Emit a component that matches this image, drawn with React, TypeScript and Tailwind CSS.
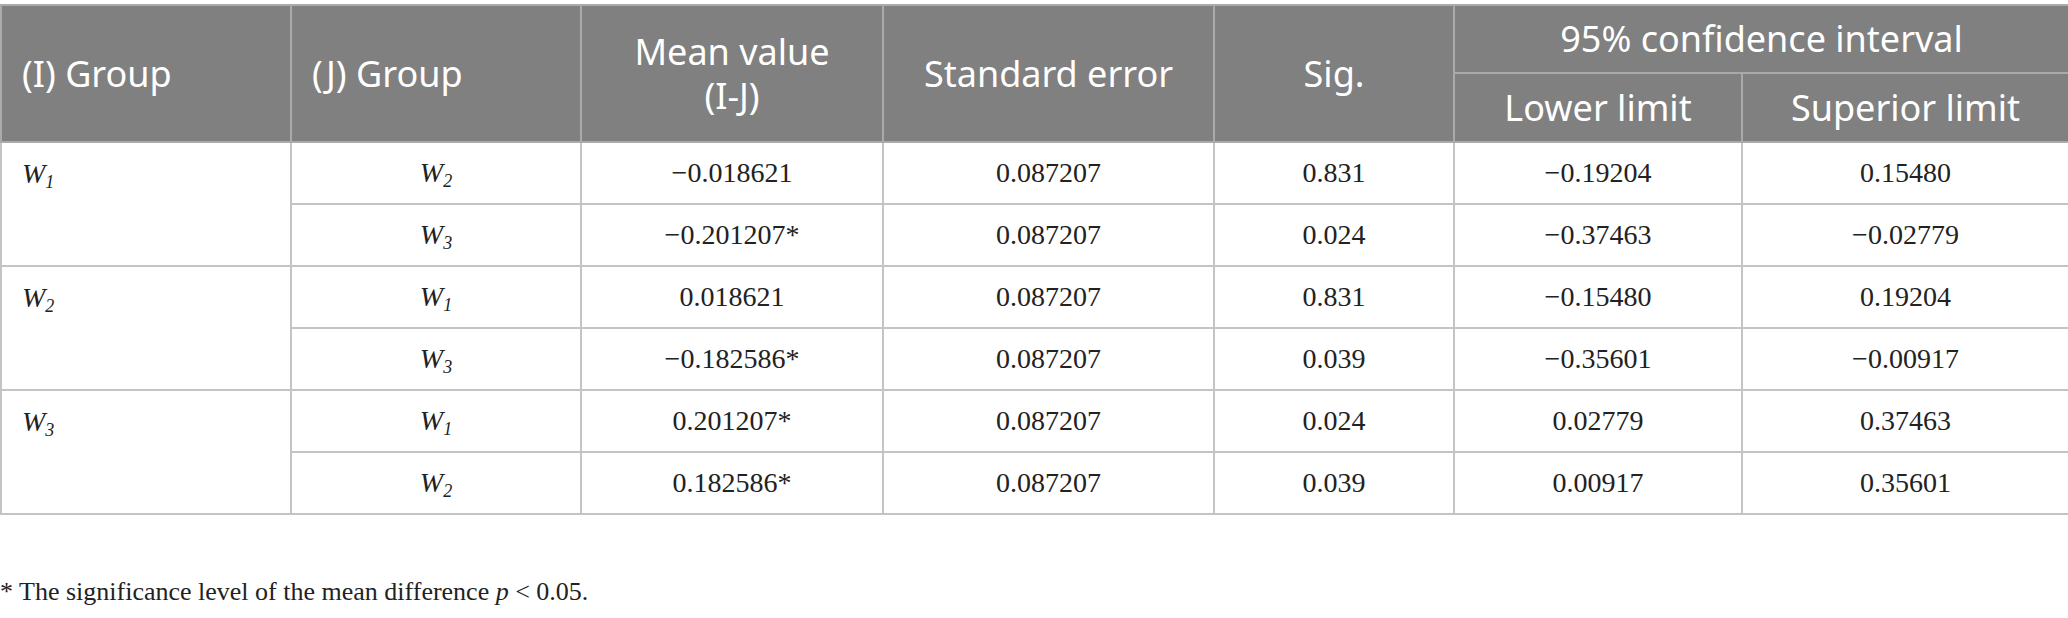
import type { ReactNode } from "react";

type Row = {
  group?: number;
  j: number;
  mean: string;
  se: string;
  sig: string;
  lower: string;
  upper: string;
};

const rows: Row[] = [
  { group: 1, j: 2, mean: "−0.018621", se: "0.087207", sig: "0.831", lower: "−0.19204", upper: "0.15480" },
  { j: 3, mean: "−0.201207*", se: "0.087207", sig: "0.024", lower: "−0.37463", upper: "−0.02779" },
  { group: 2, j: 1, mean: "0.018621", se: "0.087207", sig: "0.831", lower: "−0.15480", upper: "0.19204" },
  { j: 3, mean: "−0.182586*", se: "0.087207", sig: "0.039", lower: "−0.35601", upper: "−0.00917" },
  { group: 3, j: 1, mean: "0.201207*", se: "0.087207", sig: "0.024", lower: "0.02779", upper: "0.37463" },
  { j: 2, mean: "0.182586*", se: "0.087207", sig: "0.039", lower: "0.00917", upper: "0.35601" },
];

function W({ n }: { n: number }) {
  return (
    <span className="italic">
      W<sub className="text-[18px] italic">{n}</sub>
    </span>
  );
}

function Th({ children, className = "", rowSpan, colSpan }: { children: ReactNode; className?: string; rowSpan?: number; colSpan?: number }) {
  return (
    <th
      rowSpan={rowSpan}
      colSpan={colSpan}
      className={`border-2 border-[#a9aaa9] px-5 font-normal leading-[44px] text-white ${className}`}
    >
      {children}
    </th>
  );
}

export default function App() {
  return (
    <div className="min-h-[618px] bg-white pt-[4px]">
      <table className="w-[2068px] table-fixed border-collapse text-[#222]">
        <colgroup>
          <col className="w-[290px]" />
          <col className="w-[290px]" />
          <col className="w-[302px]" />
          <col className="w-[331px]" />
          <col className="w-[240px]" />
          <col className="w-[288px]" />
          <col className="w-[327px]" />
        </colgroup>
        <thead className="bg-[#7f807f] font-['Noto_Sans',sans-serif] text-[36px]">
          <tr className="h-[68px]">
            <Th rowSpan={2} className="text-left">(I) Group</Th>
            <Th rowSpan={2} className="text-left">(J) Group</Th>
            <Th rowSpan={2}>
              Mean value
              <br />
              (I-J)
            </Th>
            <Th rowSpan={2}>Standard error</Th>
            <Th rowSpan={2}>Sig.</Th>
            <Th colSpan={2}>95% confidence interval</Th>
          </tr>
          <tr className="h-[69px]">
            <Th>Lower limit</Th>
            <Th>Superior limit</Th>
          </tr>
        </thead>
        <tbody className="font-['Liberation_Serif',serif] text-[28px]">
          {rows.map((row, i) => (
            <tr key={i} className="h-[62px]">
              {row.group !== undefined && (
                <td rowSpan={2} className="border-2 border-[#c4c4c4] px-5 pt-[10px] align-top">
                  <W n={row.group} />
                </td>
              )}
              <td className="border-2 border-[#c4c4c4] text-center">
                <W n={row.j} />
              </td>
              <td className="border-2 border-[#c4c4c4] text-center">{row.mean}</td>
              <td className="border-2 border-[#c4c4c4] text-center">{row.se}</td>
              <td className="border-2 border-[#c4c4c4] text-center">{row.sig}</td>
              <td className="border-2 border-[#c4c4c4] text-center">{row.lower}</td>
              <td className="border-2 border-[#c4c4c4] text-center">{row.upper}</td>
            </tr>
          ))}
        </tbody>
      </table>
      <p className="mt-[57px] font-['Liberation_Serif',serif] text-[26px] text-[#222]">
        * The significance level of the mean difference <span className="italic">p</span> &lt; 0.05.
      </p>
    </div>
  );
}
